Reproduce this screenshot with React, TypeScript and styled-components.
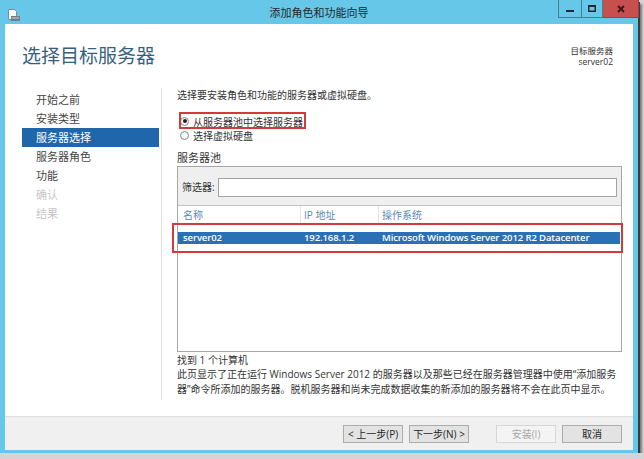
import React from "react";
import styled, { createGlobalStyle } from "styled-components";

const GlobalStyle = createGlobalStyle`
  html, body {
    margin: 0;
    padding: 0;
    background: #d4d4d4;
  }
  body {
    font-family: "Open Sans", "Noto Sans CJK SC", sans-serif;
    color: #333;
  }
  * { box-sizing: border-box; }
`;

const Window = styled.div`
  width: 638px;
  height: 453px;
  background: #66c7e8;
  display: flex;
  flex-direction: column;
  padding-bottom: 3px;
  box-shadow: 2px 2px 0 #3c3c3c, 4px 4px 2px #7a7a7a;
`;

const TitleBar = styled.div`
  height: 24px;
  display: grid;
  grid-template-columns: 1fr auto 1fr;
`;

const AppIcon = styled.div`
  padding: 5px 0 0 7px;
`;

const Title = styled.div`
  font-size: 11px;
  line-height: 24px;
  padding-top: 1px;
  color: #262626;
`;

const Controls = styled.div`
  justify-self: end;
  display: flex;
  height: 18px;
  margin-right: -1px;
`;

const CtrlButton = styled.div<{ $w: number; $close?: boolean }>`
  width: ${(p) => p.$w}px;
  height: 18px;
  display: flex;
  align-items: center;
  justify-content: center;
  background: ${(p) => (p.$close ? "#c94f4f" : "#66c7e8")};
  border: 1px solid ${(p) => (p.$close ? "#a23b3b" : "#3e8299")};
  border-top: none;
  & + & {
    border-left: none;
  }
`;

const Client = styled.div`
  flex: 1;
  margin: 0 5px;
  background: #fff;
  display: flex;
  flex-direction: column;
  min-height: 0;
`;

const Main = styled.div`
  flex: 1;
  display: flex;
  flex-direction: column;
  padding-bottom: 16px;
  min-height: 0;
`;

const Header = styled.div`
  height: 64px;
  display: flex;
  justify-content: space-between;
  align-items: flex-start;
  padding: 19px 20px 0 17px;
`;

const Heading = styled.h1`
  margin: 0;
  font-size: 19px;
  font-weight: 400;
  line-height: 26px;
  color: #36607e;
`;

const Target = styled.div`
  margin-top: 2px;
  text-align: right;
  font-size: 8.5px;
  line-height: 11px;
  color: #333;
`;

const Body = styled.div`
  flex: 1;
  display: flex;
  min-height: 0;
`;

const Nav = styled.div`
  width: 157px;
  padding: 2px 0 0 17px;
  border-right: 1px solid #e2e2e2;
`;

const NavItem = styled.div<{ $active?: boolean; $disabled?: boolean }>`
  width: 137px;
  height: 19px;
  line-height: 19px;
  padding-left: 14px;
  font-size: 11px;
  background: ${(p) => (p.$active ? "#1f66ab" : "transparent")};
  color: ${(p) => (p.$active ? "#fff" : p.$disabled ? "#c6c6c6" : "#444")};
`;

const Panel = styled.div`
  flex: 1;
  padding: 0 11px 0 15px;
  display: flex;
  flex-direction: column;
  font-size: 10px;
`;

const Text = styled.div`
  line-height: 14px;
`;

const RadioGroup = styled.div`
  margin-top: 12px;
`;

const RadioRow = styled.div<{ $marked?: boolean }>`
  position: relative;
  width: fit-content;
  height: 14px;
  display: flex;
  align-items: center;
  gap: 4px;
  padding-left: 3px;
  &::after {
    content: "";
    display: ${(p) => (p.$marked ? "block" : "none")};
    position: absolute;
    top: -2px;
    bottom: -1px;
    left: 2px;
    right: -3px;
    border: 2px solid #d33a3c;
  }
`;

const RadioDot = styled.span<{ $checked?: boolean }>`
  width: 9px;
  height: 9px;
  border-radius: 50%;
  border: 1px solid #8a8a8a;
  background: #f7f7f7;
  display: flex;
  align-items: center;
  justify-content: center;
  &::before {
    content: "";
    width: 4px;
    height: 4px;
    border-radius: 50%;
    background: ${(p) => (p.$checked ? "#1d1d1d" : "transparent")};
  }
`;

const PoolLabel = styled.div`
  margin-top: 9px;
  font-size: 11px;
  line-height: 14px;
`;

const Pool = styled.div`
  margin-top: 1px;
  height: 186px;
  border: 1px solid #a7a7a7;
  display: flex;
  flex-direction: column;
`;

const FilterBar = styled.div`
  height: 39px;
  background: #efefef;
  border-bottom: 1px solid #c2c2c2;
  display: flex;
  align-items: flex-start;
  gap: 3px;
  padding: 11px 4px 0 4px;
`;

const FilterLabel = styled.span`
  line-height: 19px;
`;

const FilterInput = styled.input`
  flex: 1;
  height: 19px;
  border: 1px solid #a3a3a3;
  background: #fff;
  outline: none;
  padding: 0 3px;
`;

const Columns = styled.div`
  display: grid;
  grid-template-columns: 122px 78px 1fr;
`;

const HeaderRow = styled(Columns)`
  height: 18px;
  color: #5a8ab2;
`;

const HeadCell = styled.div`
  line-height: 18px;
  padding-left: 5px;
  & + & {
    border-left: 1px solid #e4e4e4;
    padding-left: 3px;
  }
`;

const List = styled.div`
  flex: 1;
  padding-top: 8px;
`;

const Marked = styled.div`
  position: relative;
  &::after {
    content: "";
    position: absolute;
    top: -9px;
    bottom: -9px;
    left: -6px;
    right: -2px;
    border: 2px solid #d33a3c;
  }
`;

const ServerRow = styled(Columns)<{ $selected?: boolean }>`
  height: 12px;
  margin-right: 1px;
  background: ${(p) => (p.$selected ? "#2a70b6" : "transparent")};
  color: ${(p) => (p.$selected ? "#fff" : "#333")};
  font-size: 9.5px;
  font-weight: 600;
  letter-spacing: -0.1px;
`;

const Cell = styled.div`
  line-height: 12px;
  padding-left: 5px;
  white-space: nowrap;
  & + & {
    padding-left: 4px;
  }
`;

const Found = styled.div`
  margin-top: 1px;
  line-height: 14px;
`;

const Note = styled.div`
  line-height: 15px;
`;

const Footer = styled.div`
  height: 34px;
  background: #f0f0f0;
  border-top: 1px solid #dedede;
  display: flex;
  align-items: center;
  justify-content: flex-end;
  gap: 6px;
  padding-right: 11px;
`;

const Button = styled.div<{ $disabled?: boolean; $lead?: number }>`
  width: 60px;
  height: 18px;
  display: flex;
  align-items: center;
  justify-content: center;
  font-size: 10px;
  margin-left: ${(p) => p.$lead || 0}px;
  background: ${(p) => (p.$disabled ? "#f4f4f4" : "#e3e3e3")};
  border: 1px solid ${(p) => (p.$disabled ? "#d6d6d6" : "#acacac")};
  color: ${(p) => (p.$disabled ? "#a8a8a8" : "#262626")};
`;

const navItems = [
  { label: "开始之前" },
  { label: "安装类型" },
  { label: "服务器选择", active: true },
  { label: "服务器角色" },
  { label: "功能" },
  { label: "确认", disabled: true },
  { label: "结果", disabled: true },
];

const servers = [
  { name: "server02", ip: "192.168.1.2", os: "Microsoft Windows Server 2012 R2 Datacenter" },
];

export default function App() {
  return (
    <>
      <GlobalStyle />
      <Window>
        <TitleBar>
          <AppIcon>
            <svg width="14" height="14" viewBox="0 0 14 14">
              <path d="M1.5 1.5h6l2 2v8h-8z" fill="#fbfbfb" stroke="#7f8d96" />
              <rect x="4" y="8" width="9" height="5" fill="#6e7e89" />
              <rect x="5" y="9.5" width="7" height="1" fill="#c9d3d9" />
            </svg>
          </AppIcon>
          <Title>添加角色和功能向导</Title>
          <Controls>
            <CtrlButton $w={24}>
              <svg width="8" height="8" viewBox="0 0 8 8">
                <rect x="0" y="5" width="8" height="2" fill="#1e2a30" />
              </svg>
            </CtrlButton>
            <CtrlButton $w={21}>
              <svg width="8" height="7" viewBox="0 0 8 7">
                <rect x="0.75" y="0.75" width="6.5" height="5.5" fill="none" stroke="#1e2a30" strokeWidth="1.5" />
                <rect x="0" y="0" width="8" height="2" fill="#1e2a30" />
              </svg>
            </CtrlButton>
            <CtrlButton $w={36} $close>
              <svg width="8" height="8" viewBox="0 0 8 8">
                <path d="M1 1l6 6M7 1l-6 6" stroke="#3a1a1a" strokeWidth="2" />
              </svg>
            </CtrlButton>
          </Controls>
        </TitleBar>
        <Client>
          <Main>
            <Header>
              <Heading>选择目标服务器</Heading>
              <Target>
                <div>目标服务器</div>
                <div>server02</div>
              </Target>
            </Header>
            <Body>
              <Nav>
                {navItems.map((n) => (
                  <NavItem key={n.label} $active={n.active} $disabled={n.disabled}>
                    {n.label}
                  </NavItem>
                ))}
              </Nav>
              <Panel>
                <Text>选择要安装角色和功能的服务器或虚拟硬盘。</Text>
                <RadioGroup>
                  <RadioRow $marked>
                    <RadioDot $checked />
                    从服务器池中选择服务器
                  </RadioRow>
                  <RadioRow>
                    <RadioDot />
                    选择虚拟硬盘
                  </RadioRow>
                </RadioGroup>
                <PoolLabel>服务器池</PoolLabel>
                <Pool>
                  <FilterBar>
                    <FilterLabel>筛选器:</FilterLabel>
                    <FilterInput />
                  </FilterBar>
                  <HeaderRow>
                    <HeadCell>名称</HeadCell>
                    <HeadCell>IP 地址</HeadCell>
                    <HeadCell>操作系统</HeadCell>
                  </HeaderRow>
                  <List>
                    {servers.map((s) => (
                      <Marked key={s.name}>
                        <ServerRow $selected>
                          <Cell>{s.name}</Cell>
                          <Cell>{s.ip}</Cell>
                          <Cell>{s.os}</Cell>
                        </ServerRow>
                      </Marked>
                    ))}
                  </List>
                </Pool>
                <Found>找到 1 个计算机</Found>
                <Note>
                  此页显示了正在运行 Windows Server 2012 的服务器以及那些已经在服务器管理器中使用“添加服务
                  <br />
                  器”命令所添加的服务器。脱机服务器和尚未完成数据收集的新添加的服务器将不会在此页中显示。
                </Note>
              </Panel>
            </Body>
          </Main>
          <Footer>
            <Button>&lt; 上一步(P)</Button>
            <Button>下一步(N) &gt;</Button>
            <Button $disabled $lead={21}>安装(I)</Button>
            <Button>取消</Button>
          </Footer>
        </Client>
      </Window>
    </>
  );
}
